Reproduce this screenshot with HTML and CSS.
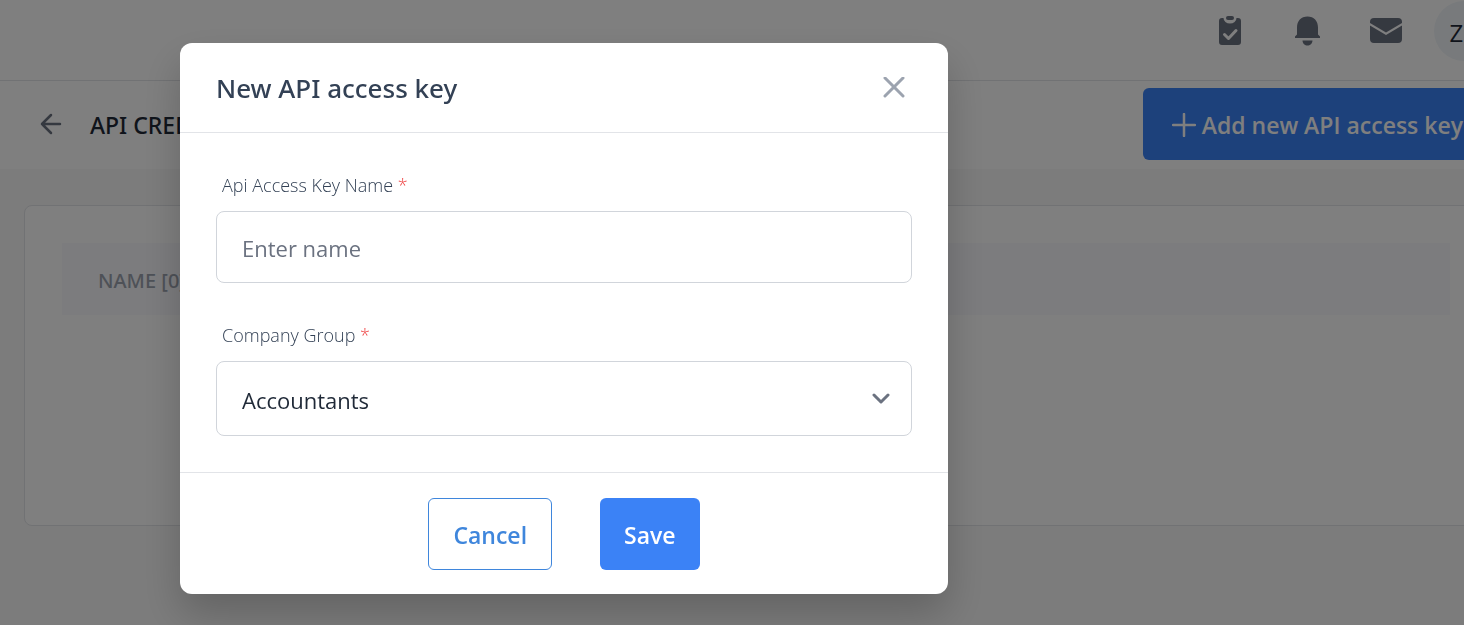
FILE: index.html
```html
<!DOCTYPE html>
<html lang="en">
<head>
    <meta charset="UTF-8">
    <meta name="viewport" content="width=device-width, initial-scale=1.0">
    <title>API Credentials</title>
    <link rel="stylesheet" href="styles.css">
</head>
<body>

    <div class="page">
        <!-- Top bar -->
        <header class="topbar">
            <button class="icon-btn" aria-label="Tasks">
                <svg width="26" height="30" viewBox="0 0 26 30">
                    <path fill="currentColor" d="M4 2h1.500a6.500 5.500 0 0 0 13 0H20a3 3 0 0 1 3 3v21a3 3 0 0 1-3 3H4a3 3 0 0 1-3-3V5a3 3 0 0 1 3-3z"/>
                    <rect x="8" y="0" width="8" height="4" rx="2" fill="currentColor"/>
                    <path d="M6.500 18.500l4 4 7.500-8" fill="none" stroke="#fff" stroke-width="3" stroke-linecap="round" stroke-linejoin="round"/>
                </svg>
            </button>
            <button class="icon-btn" aria-label="Notifications">
                <svg width="26" height="30" viewBox="0 0 26 30">
                    <path fill="currentColor" d="M13.500 0.500c6.500 0 10.500 4.500 10.500 11v7l2 2V22H1v-1.500l2-2v-7C3 5 7 0.500 13.500 0.500zM8.500 24.500h10c0 3-2.500 5-5 5s-5-2-5-5z"/>
                </svg>
            </button>
            <button class="icon-btn" aria-label="Messages">
                <svg width="32" height="26" viewBox="0 0 32 26">
                    <path fill="currentColor" d="M4 0h24a4 4 0 0 1 4 4v1L16 14.500 0 5V4a4 4 0 0 1 4-4z"/>
                    <path fill="currentColor" d="M0 7.500l16 9.500L32 7.500V21a4 4 0 0 1-4 4H4a4 4 0 0 1-4-4z"/>
                </svg>
            </button>
            <span class="avatar">ZC</span>
        </header>

        <!-- Page heading -->
        <div class="page-header">
            <a class="back" href="#" aria-label="Back">
                <svg width="22" height="22" viewBox="0 0 22 22" fill="none" stroke="currentColor" stroke-width="2.500" stroke-linecap="round" stroke-linejoin="round">
                    <path d="M20 11H2M11 2l-9 9 9 9"/>
                </svg>
            </a>
            <h1>API CREDENTIALS</h1>
            <button class="btn btn-primary btn-add">
                <svg width="24" height="24" viewBox="0 0 24 24" fill="none" stroke="currentColor" stroke-width="2.500" stroke-linecap="round">
                    <path d="M12 1v22M1 12h22"/>
                </svg>
                Add new API access key
            </button>
        </div>

        <!-- Key list -->
        <main class="card">
            <table class="keys">
                <thead>
                    <tr><th>NAME [0]</th></tr>
                </thead>
            </table>
        </main>
    </div>

    <!-- New key dialog -->
    <div class="backdrop">
        <form class="modal" role="dialog" aria-labelledby="modal-title">
            <div class="modal-header">
                <h2 id="modal-title">New API access key</h2>
                <button type="button" class="close" aria-label="Close">
                    <svg width="22" height="22" viewBox="0 0 22 22" fill="none" stroke="currentColor" stroke-width="3" stroke-linecap="round">
                        <path d="M2 1l18 18M20 1L2 19"/>
                    </svg>
                </button>
            </div>
            <div class="modal-body">
                <div class="field">
                    <label for="key-name">Api Access Key Name <span class="required">*</span></label>
                    <input type="text" id="key-name" placeholder="Enter name">
                </div>
                <div class="field">
                    <label for="group">Company Group <span class="required">*</span></label>
                    <div class="select">
                        <select id="group">
                            <option>Accountants</option>
                        </select>
                        <svg class="chevron" width="18" height="12" viewBox="0 0 18 12" fill="none" stroke="currentColor" stroke-width="3" stroke-linecap="round" stroke-linejoin="round">
                            <path d="M2 2l7 7 7-7"/>
                        </svg>
                    </div>
                </div>
            </div>
            <div class="modal-footer">
                <button type="button" class="btn btn-outline">Cancel</button>
                <button type="submit" class="btn btn-primary">Save</button>
            </div>
        </form>
    </div>

</body>
</html>
```
FILE: styles.css
```css
:root {
    --primary: #3b82f6;
    --text: #1f2937;
    --title: #334155;
    --muted: #6b7280;
    --border: #d1d5db;
    --line: #e2e4e8;
}

* { box-sizing: border-box; margin: 0; padding: 0; }

body {
    min-height: 100vh;
    overflow: hidden;
    font-family: "Open Sans", "Noto Sans", sans-serif;
    font-size: 23px;
    color: var(--text);
    background: #f8f8f8;
}

button, input, select { font: inherit; }
button { border: none; background: none; cursor: pointer; }
svg { display: block; flex: none; }

/* The page runs past the right edge of the window */
.page { width: calc(100% + 48px); }

.topbar {
    display: flex;
    justify-content: flex-end;
    align-items: center;
    gap: 50px;
    height: 81px;
    padding: 0 18px 18px;
    border-bottom: 1px solid var(--line);
    background: #fff;
}

.icon-btn { color: var(--muted); }

.avatar {
    display: flex;
    align-items: center;
    justify-content: center;
    width: 60px;
    height: 60px;
    margin-left: -18px;
    padding-top: 2px;
    border-radius: 50%;
    background: #f1f5f9;
    font-size: 24px;
}

.page-header {
    display: flex;
    align-items: center;
    height: 88px;
    padding: 0 20px 2px 40px;
    background: #fff;
}

.page-header h1 {
    margin-left: 28px;
    padding-top: 2px;
    font-family: "Noto Sans", sans-serif;
    font-size: 23px;
    font-weight: 500;
}

.back { color: var(--muted); }

/* Buttons */
.btn {
    display: flex;
    align-items: center;
    justify-content: center;
    height: 72px;
    padding: 2px 24px 0;
    border-radius: 6px;
    font-size: 23px;
    font-weight: 600;
}

.btn-primary { background: var(--primary); color: #fff; }
.btn-outline { border: 1px solid #3f86dc; color: #3f86dc; }

.btn-add {
    gap: 6px;
    margin-left: auto;
    padding: 2px 29px 0;
}

.card {
    min-height: 321px;
    margin: 36px 24px;
    padding: 37px;
    border: 1px solid var(--line);
    border-radius: 8px;
    background: #fff;
}

.keys { width: 100%; border-collapse: collapse; }

.keys th {
    height: 72px;
    padding: 2px 36px 0;
    background: #f8f8fd;
    color: #9ca3af;
    font-family: "Noto Sans", sans-serif;
    font-size: 20px;
    font-weight: 500;
    text-align: left;
}

/* Dialog */
.backdrop {
    position: fixed;
    inset: 0;
    padding: 43px 180px;
    background: rgba(0, 0, 0, 0.5);
}

.modal {
    max-width: 768px;
    border-radius: 12px;
    background: #fff;
    box-shadow: 0 20px 40px rgba(0, 0, 0, 0.2);
}

.modal-header {
    display: flex;
    align-items: center;
    justify-content: space-between;
    height: 90px;
    padding: 0 43px 0 36px;
    border-bottom: 1px solid var(--line);
}

.modal-header h2 {
    font-family: "Noto Sans", sans-serif;
    font-size: 26px;
    font-weight: 500;
    color: var(--title);
}

.close { color: #9ca3af; }

.modal-body { padding: 40px 36px 36px; }

.field + .field { margin-top: 40px; }

.field label {
    display: block;
    margin-bottom: 14px;
    padding-left: 6px;
    font-size: 18px;
    line-height: 24px;
    font-weight: 300;
    color: var(--title);
}

.required { color: #ef4444; }

.field input,
.field select {
    display: block;
    width: 100%;
    height: 72px;
    padding: 2px 25px 0;
    border: 1px solid var(--border);
    border-radius: 8px;
    background: #fff;
    color: var(--text);
    font-size: 22px;
}

.field input::placeholder { color: var(--muted); opacity: 1; }

.field select { height: 75px; appearance: none; }

.select { position: relative; }

.chevron {
    position: absolute;
    top: 32px;
    right: 22px;
    color: var(--muted);
    pointer-events: none;
}

.modal-footer {
    display: flex;
    justify-content: center;
    gap: 48px;
    padding: 25px 24px 24px;
    border-top: 1px solid var(--line);
}
```
